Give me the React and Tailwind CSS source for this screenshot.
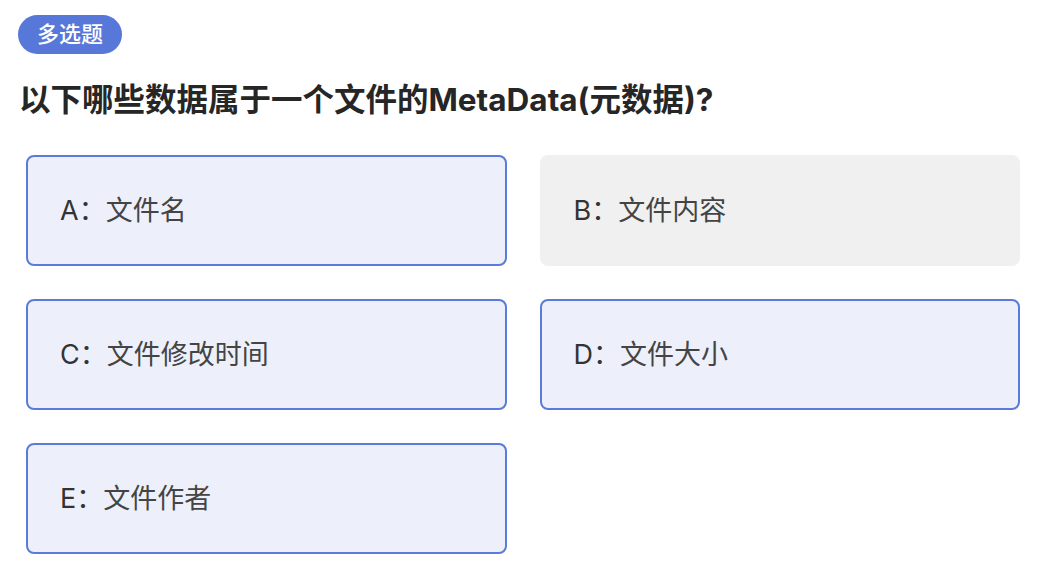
import React from 'react';

const options = [
  { key: 'A', text: '文件名', selected: true },
  { key: 'B', text: '文件内容', selected: false },
  { key: 'C', text: '文件修改时间', selected: true },
  { key: 'D', text: '文件大小', selected: true },
  { key: 'E', text: '文件作者', selected: true },
];

export default function App() {
  return (
    <div
      className="min-h-screen bg-white pt-[15px] pl-[18px] pr-[24px] text-[#333]"
      style={{ fontFamily: 'Inter, "Noto Sans CJK SC", sans-serif' }}>
      {/* 题型标签 */}
      <div className="inline-flex h-[39px] items-center rounded-full bg-[#5778d9] px-[19px] text-[22px] font-medium text-white">
        多选题
      </div>

      {/* 题目 */}
      <h2 className="mt-[23px] pl-[1px] text-[31.5px] font-bold leading-[46px] text-[#262626]">
        以下哪些数据属于一个文件的MetaData(元数据)?
      </h2>

      {/* 选项 */}
      <div className="mt-[32px] ml-[8px] grid grid-cols-2 gap-[33px]">
        {options.map((o) => (
          <div
            key={o.key}
            className={`flex h-[111px] items-center rounded-[8px] px-[32px] pt-[2px] text-[27px] ${
              o.selected
                ? 'border-2 border-[#5a7bd8] bg-[#edf0fa]'
                : 'border-2 border-transparent bg-[#f0f0f0]'
            }`}>
            <span className="text-[#333]">{o.key}：</span>
            <span className="text-[#444]">{o.text}</span>
          </div>
        ))}
      </div>
    </div>
  );
}
